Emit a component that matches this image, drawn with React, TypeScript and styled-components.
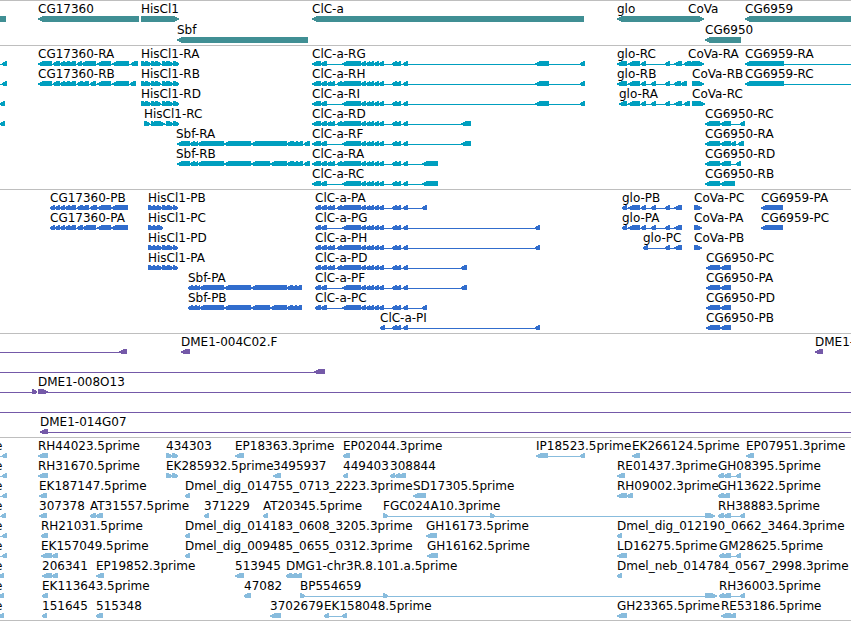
import React from 'react';
import styled, { createGlobalStyle } from 'styled-components';

type Span = [number, number];

interface Feature {
  label?: string;
  at: number;
  spans: Span[];
  forward?: boolean;
  /* intron line that runs past the first or last span */
  line?: Span;
}

interface TrackData {
  name: string;
  color: string;
  pitch: number;
  gap: number;
  rows: Feature[][];
}

const GlobalStyle = createGlobalStyle`
  body {
    margin: 0;
    background: #ffffff;
    color: #000000;
    font-family: "DejaVu Sans", sans-serif;
    font-size: 12px;
  }
`;

const Browser = styled.main`
  display: flex;
  flex-direction: column;
  overflow: hidden;
  border-bottom: 1px solid #bebebe;
`;

const Track = styled.section<{ $color: string; $gap: number }>`
  display: flex;
  flex-direction: column;
  border-top: 1px solid #bebebe;
  padding-bottom: ${(p) => p.$gap}px;
  color: ${(p) => p.$color};
`;

const Row = styled.div<{ $pitch: number }>`
  position: relative;
  height: ${(p) => p.$pitch}px;
`;

const Label = styled.span<{ $at: number }>`
  position: absolute;
  top: 0;
  left: ${(p) => p.$at}px;
  line-height: 16px;
  white-space: nowrap;
  color: #000000;
`;

const Glyphs = styled.svg`
  display: block;
  width: 100%;
  height: 100%;
  fill: currentColor;
  shape-rendering: crispEdges;
`;

const EDGE = 4000;
const TOP = 15;

/* "a-b c-d" -> [[a, b], [c, d]] */
const spans = (text: string): Span[] =>
  text.split(' ').map((s) => s.split('-').map(Number) as Span);

const rev = (at: number, text: string, label?: string, line?: Span): Feature => ({
  at, label, line, spans: text ? spans(text) : [],
});

const fwd = (at: number, text: string, label?: string, line?: Span): Feature => ({
  ...rev(at, text, label, line), forward: true,
});

/* feature entering from the left edge of the view */
const enter = (end: number, label?: string): Feature => ({
  at: -5, label, spans: [[end - 5, end]], line: [-20, end],
});

/* box with a stepped point, one pixel row at a time */
const SHORT_STEPS = [3, 1, 0, 0, 1, 3];
const LONG_STEPS = [4, 2, 0, 0, 2, 4];

const arrow = ([a, b]: Span, forward?: boolean) =>
  (b - a < 8 ? SHORT_STEPS : LONG_STEPS).map((step, i) => {
    const inset = Math.min(step, b - a - 1);
    const from = forward ? a : a + inset;
    const to = forward ? b - inset : b;
    return `M${from} ${TOP + i}H${to}v1H${from}Z`;
  }).join('');

const CG17_START = '53-60 60-65 64-70 69-76';
const CLC_MID = '361-366 366-370 369-374 374-379 379-384 392-397 396-401 403-408';
const CLC_SHORT = `321-327 342-361 ${CLC_MID}`;
const CLC_FULL = `321-327 327-331 330-335 337-342 340-361 ${CLC_MID}`;
const HIS_T = '141-147 145-151 151-157 155-161 162-168 166-173 173-179';
const HIS_P = '148-154 153-158 157-162 162-168 167-173 173-178';
const SBF_TAIL = '287-294 293-298 297-303 304-310';
const GLO_P = '622-627 628-640 641-646 651-656 665-670 674-682';

const tracks: TrackData[] = [
  {
    name: 'Genes', color: '#408f94', pitch: 21, gap: 2,
    rows: [
      [
        { at: 0, spans: [[-20, 6]] },
        rev(38, '38-139', 'CG17360'),
        fwd(141, '141-179', 'HisCl1'),
        rev(312, '312-584', 'ClC-a'),
        rev(617, '617-690', 'glo'),
        fwd(688, '688-704', 'CoVa'),
        rev(745, `745-${EDGE}`, 'CG6959'),
      ],
      [rev(177, '177-308', 'Sbf'), rev(705, '705-741', 'CG6950')],
    ],
  },
  {
    name: 'Transcripts', color: '#009fbf', pitch: 20, gap: 3,
    rows: [
      [
        enter(7),
        rev(38, `38-52 ${CG17_START} 77-82 81-96 97-111 112-129 131-138`, 'CG17360-RA'),
        fwd(141, HIS_T, 'HisCl1-RA'),
        rev(312, `312-321 ${CLC_SHORT} 535-549 580-585`, 'ClC-a-RG'),
        rev(617, '617-627 628-640 641-646 665-670 674-682 684-690', 'glo-RC'),
        fwd(688, '688-692 690-694 692-704', 'CoVa-RA'),
        rev(745, '745-784', 'CG6959-RA', [745, EDGE]),
      ],
      [
        enter(7),
        rev(38, `38-52 ${CG17_START} 77-83 82-89 90-96 97-111 112-129 130-136`, 'CG17360-RB'),
        fwd(141, HIS_T, 'HisCl1-RB'),
        rev(312, `312-321 ${CLC_FULL} 535-549 580-585`, 'ClC-a-RH'),
        rev(617, '617-627 628-640 641-646 651-656 665-670 674-681 681-687', 'glo-RB'),
        fwd(692, '692-704', 'CoVa-RB'),
        rev(745, '745-784', 'CG6959-RC', [745, EDGE]),
      ],
      [
        enter(5),
        fwd(141, HIS_T, 'HisCl1-RD'),
        rev(312, `312-321 ${CLC_SHORT} 535-549 580-585`, 'ClC-a-RI'),
        rev(619, '619-627 628-640 641-646 651-656 665-670 674-682 684-690', 'glo-RA'),
        fwd(692, '692-705', 'CoVa-RC'),
      ],
      [
        enter(5),
        fwd(144, '144-150 151-156 154-165 166-173 173-179', 'HisCl1-RC'),
        rev(312, `312-321 ${CLC_FULL} 461-471`, 'ClC-a-RD'),
        rev(705, '705-720 720-731 740-745', 'CG6950-RC'),
      ],
      [
        rev(176, `177-190 190-195 194-198 197-224 224-251 251-287 ${SBF_TAIL}`, 'Sbf-RA'),
        rev(312, `312-321 ${CLC_SHORT} 461-471`, 'ClC-a-RF'),
        rev(705, '705-720 720-731 731-736 738-744', 'CG6950-RA'),
      ],
      [
        rev(176, `177-190 190-195 194-198 197-224 224-251 251-270 270-287 ${SBF_TAIL}`, 'Sbf-RB'),
        rev(312, `312-321 ${CLC_FULL} 422-438`, 'ClC-a-RA'),
        rev(705, '705-720 720-731 736-741', 'CG6950-RD'),
      ],
      [
        rev(312, `312-321 ${CLC_SHORT} 422-438`, 'ClC-a-RC'),
        rev(705, '705-720 720-735', 'CG6950-RB'),
      ],
    ],
  },
  {
    name: 'Proteins', color: '#316dcd', pitch: 20, gap: 3,
    rows: [
      [
        rev(50, '50-55 55-60 60-65 65-70 69-76 77-83 82-89 90-97 97-111 111-128', 'CG17360-PB'),
        fwd(148, HIS_P, 'HisCl1-PB'),
        rev(315, `315-321 ${CLC_FULL} 422-427`, 'ClC-a-PA'),
        rev(622, GLO_P, 'glo-PB'),
        fwd(694, '694-702', 'CoVa-PC'),
        rev(761, '761-783', 'CG6959-PA'),
      ],
      [
        rev(50, '50-55 55-60 60-65 65-70 69-76 77-83 82-96 97-111 111-128', 'CG17360-PA'),
        fwd(148, '148-154 153-158 157-163', 'HisCl1-PC'),
        rev(315, `315-321 ${CLC_SHORT} 535-540`, 'ClC-a-PG'),
        rev(622, GLO_P, 'glo-PA'),
        fwd(694, '694-702', 'CoVa-PA'),
        rev(761, '761-783', 'CG6959-PC'),
      ],
      [
        fwd(148, HIS_P, 'HisCl1-PD'),
        rev(315, `315-321 ${CLC_FULL} 535-540`, 'ClC-a-PH'),
        rev(643, '643-648 665-670 674-682', 'glo-PC'),
        fwd(694, '694-702', 'CoVa-PB'),
      ],
      [
        fwd(148, HIS_P, 'HisCl1-PA'),
        rev(315, `315-321 ${CLC_FULL} 461-467`, 'ClC-a-PD'),
        rev(706, '706-720 720-731', 'CG6950-PC'),
      ],
      [
        rev(188, '188-193 192-197 196-200 199-224 224-251 251-287 287-293 292-297 296-302', 'Sbf-PA'),
        rev(315, `315-321 ${CLC_SHORT} 461-467`, 'ClC-a-PF'),
        rev(706, '706-720 720-731', 'CG6950-PA'),
      ],
      [
        rev(188, '188-193 192-197 196-200 199-224 224-251 251-270 270-287 287-293 292-297 296-302', 'Sbf-PB'),
        rev(315, `315-321 ${CLC_SHORT} 422-427`, 'ClC-a-PC'),
        rev(706, '706-720 720-731', 'CG6950-PD'),
      ],
      [
        rev(380, '380-385 392-397 396-401 403-408 535-540', 'ClC-a-PI'),
        rev(706, '706-720 720-731', 'CG6950-PB'),
      ],
    ],
  },
  {
    name: 'BAC ends', color: '#7459a8', pitch: 20, gap: 3,
    rows: [
      [
        rev(0, '119-127', undefined, [-20, 127]),
        rev(181, '181-190', 'DME1-004C02.F'),
        rev(815, '815-823', 'DME1-'),
      ],
      [rev(0, '314-325', undefined, [-20, 325])],
      [
        fwd(0, '32-37', undefined, [-20, 37]),
        fwd(38, '38-48', 'DME1-008O13', [38, EDGE]),
      ],
      [rev(0, '', undefined, [-20, EDGE])],
      [rev(40, '40-48', 'DME1-014G07', [40, EDGE])],
    ],
  },
  {
    name: 'ESTs', color: '#88bcdd', pitch: 20, gap: 2,
    rows: [
      [
        enter(7, 'e'),
        rev(38, '38-48', 'RH44023.5prime'),
        fwd(166, '166-172 172-178', '434303'),
        rev(235, '235-244', 'EP18363.3prime'),
        rev(343, '343-350', 'EP02044.3prime'),
        rev(536, '536-548 580-585', 'IP18523.5prime'),
        rev(632, '632-640', 'EK266124.5prime'),
        rev(746, '746-754', 'EP07951.3prime'),
      ],
      [
        enter(7, 'e'),
        rev(38, '38-48', 'RH31670.5prime'),
        fwd(166, '166-172 172-178', 'EK285932.5prime'),
        rev(273, '273-281', '3495937'),
        rev(343, '343-348', '449403'),
        rev(390, '390-395 395-400 399-406', '308844'),
        rev(617, '617-625', 'RE01437.3prime'),
        rev(718, '718-724 723-731 736-741', 'GH08395.5prime'),
      ],
      [
        enter(7, 'e'),
        rev(39, '39-47', 'EK187147.5prime'),
        rev(185, '185-190', 'Dmel_dig_014755_0713_2223.3prime'),
        rev(413, '413-426', 'SD17305.5prime'),
        rev(617, '617-627 627-633', 'RH09002.3prime'),
        rev(718, '718-724 722-730', 'GH13622.5prime'),
      ],
      [
        enter(6, 'e'),
        rev(39, '39-47', '307378'),
        rev(90, '90-96 96-103', 'AT31557.5prime'),
        rev(204, '204-209', '371229'),
        rev(263, '263-268', 'AT20345.5prime'),
        fwd(383, '383-388 490-495 705-715', 'FGC024A10.3prime'),
        rev(718, '718-724 723-731 740-745', 'RH38883.5prime'),
      ],
      [
        enter(7, 'e'),
        rev(41, '41-48', 'RH21031.5prime'),
        rev(185, '185-190', 'Dmel_dig_014183_0608_3205.3prime'),
        rev(426, '426-437', 'GH16173.5prime'),
        rev(617, '617-622', 'Dmel_dig_012190_0662_3464.3prime'),
      ],
      [
        enter(7, 'e'),
        rev(41, '41-52 52-58', 'EK157049.5prime'),
        rev(185, '185-190', 'Dmel_dig_009485_0655_0312.3prime'),
        rev(427, '427-438', 'GH16162.5prime'),
        rev(617, '617-627', 'LD16275.5prime'),
        rev(719, '719-724 722-731 736-741', 'GM28625.5prime'),
      ],
      [
        enter(4, 'e'),
        rev(42, '42-52 52-58', '206341'),
        rev(96, '96-104', 'EP19852.3prime'),
        rev(235, '235-244', '513945'),
        rev(286, '286-292 291-297 296-302', 'DMG1-chr3R.8.101.a.5prime'),
        rev(617, '617-622', 'Dmel_neb_014784_0567_2998.3prime'),
      ],
      [
        enter(4, 'e'),
        rev(42, '42-48', 'EK113643.5prime'),
        rev(244, '244-251', '47082'),
        fwd(300, '300-305 383-388 705-717', 'BP554659'),
        rev(719, '719-724 722-731 740-745', 'RH36003.5prime'),
      ],
      [
        enter(4, 'e'),
        rev(42, '42-47', '151645'),
        rev(96, '96-103', '515348'),
        rev(270, '270-281', '3702679'),
        rev(324, '324-329 342-347', 'EK158048.5prime'),
        rev(617, '617-627', 'GH23365.5prime'),
        rev(721, '721-731 730-736', 'RE53186.5prime'),
      ],
    ],
  },
];

function FeatureGlyph({ feature }: { feature: Feature }) {
  const { spans: parts, line, forward } = feature;
  const [from, to] = line ?? [parts[0]?.[0] ?? 0, parts[parts.length - 1]?.[1] ?? 0];
  return (
    <g>
      <rect x={from} y={TOP + 3} width={to - from} height={1} />
      {parts.map((part) => (
        <path key={part[0]} d={arrow(part, forward)} />
      ))}
    </g>
  );
}

export default function App() {
  return (
    <>
      <GlobalStyle />
      <Browser>
        {tracks.map((track) => (
          <Track key={track.name} aria-label={track.name} $color={track.color} $gap={track.gap}>
            {track.rows.map((row, i) => (
              <Row key={i} $pitch={track.pitch}>
                <Glyphs aria-hidden="true">
                  {row.map((feature, j) => (
                    <FeatureGlyph key={j} feature={feature} />
                  ))}
                </Glyphs>
                {row.map(
                  (feature, j) =>
                    feature.label && (
                      <Label key={j} $at={feature.at}>
                        {feature.label}
                      </Label>
                    ),
                )}
              </Row>
            ))}
          </Track>
        ))}
      </Browser>
    </>
  );
}
